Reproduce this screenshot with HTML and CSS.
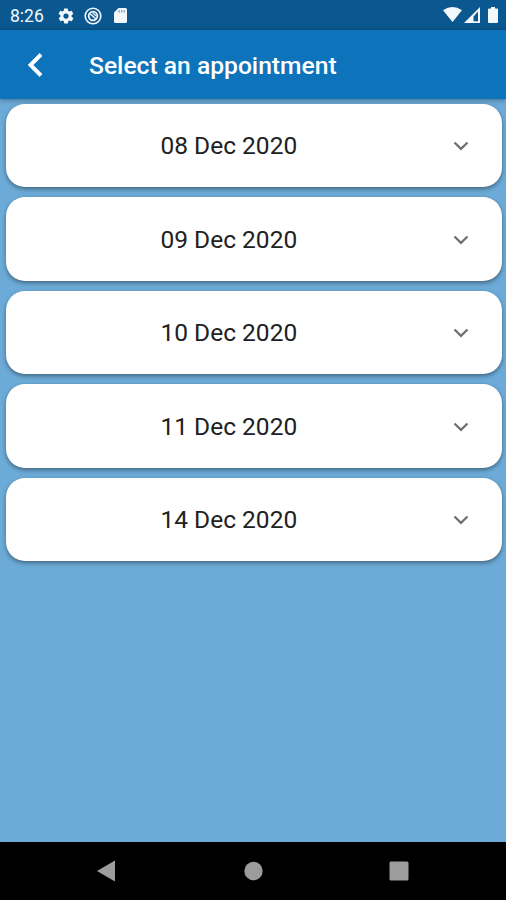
FILE: index.html
```html
<!DOCTYPE html>
<html lang="en">
<head>
<meta charset="utf-8">
<title>Select an appointment</title>
<link rel="stylesheet" href="styles.css">
</head>
<body>
<div class="screen">
  <div class="status">
    <span class="time">8:26</span>
    <svg class="gear" width="18" height="18" viewBox="0 0 24 24"><path fill="currentColor" d="M19.4 13c0-.3.1-.6.1-1s0-.7-.1-1l2.1-1.600c.2-.2.2-.4.1-.6l-2-3.500c-.1-.2-.4-.3-.6-.2l-2.500 1c-.5-.4-1.100-.7-1.700-1l-.4-2.600c0-.3-.2-.5-.5-.5h-4c-.2 0-.4.2-.5.4l-.4 2.700c-.6.2-1.100.6-1.700 1l-2.500-1c-.2-.1-.5 0-.6.2l-2 3.500c-.1.2-.1.5.1.6L4.600 11c0 .3-.1.6-.1 1s0 .7.1 1l-2.100 1.600c-.2.2-.2.4-.1.6l2 3.500c.1.2.4.3.6.2l2.500-1c.5.4 1.100.7 1.700 1l.4 2.600c0 .3.2.5.5.5h4c.2 0 .5-.2.5-.4l.4-2.600c.6-.3 1.200-.6 1.700-1l2.500 1c.2.100.5 0 .6-.2l2-3.500c.1-.2.1-.5-.1-.6L19.400 13zM12 15.500a3.500 3.500 0 1 1 0-7 3.500 3.500 0 0 1 0 7z"/></svg>
    <svg class="sync" width="18" height="18" viewBox="0 0 18 18" fill="none" stroke="currentColor"><circle cx="9" cy="9" r="7.800" stroke-width="1.600"/><circle cx="9" cy="9" r="4.300" stroke-width="1.800"/><path d="M5.800 6.500l6 5.300" stroke-width="1.500"/><path d="M8.800 6l3.200 2.800" stroke-width="1.200"/></svg>
    <svg class="sd" width="13" height="15" viewBox="0 0 13 15"><path fill="currentColor" d="M4.500 0H11.500Q13 0 13 1.500V13.500Q13 15 11.500 15H1.500Q0 15 0 13.500V4.500z"/><path d="M5.200 2v2.400M7.700 2v2.400M10.200 2v2.400" stroke="#7fa6c6" stroke-width="1.300"/></svg>
    <svg class="wifi" width="19" height="15" viewBox="0 0 19 15"><path fill="currentColor" d="M0 3.300Q9.500-3.300 19 3.300L9.500 15z"/></svg>
    <svg class="signal" width="16" height="16" viewBox="0 0 16 16"><path fill="currentColor" fill-rule="evenodd" d="M0 16L16 0V16zM9.500 9.500V14.300H14V4.500z"/></svg>
    <svg class="battery" width="10" height="16" viewBox="0 0 10 16"><path fill="currentColor" d="M3 0h4v1.500h2q1 0 1 1V15q0 1-1 1H1q-1 0-1-1V2.500q0-1 1-1h2z"/></svg>
  </div>
  <header class="bar">
    <svg class="back" width="16" height="26" viewBox="0 0 16 26"><path d="M14 2.500L3.500 13L14 23.500" fill="none" stroke="currentColor" stroke-width="3.900"/></svg>
    <h1>Select an appointment</h1>
  </header>
  <main class="list">
    <div class="card"><span class="date">08 Dec 2020</span><svg class="chev" width="16" height="10" viewBox="0 0 16 10"><path d="M1.500 1.500L8 7.800L14.500 1.500"/></svg></div>
    <div class="card"><span class="date">09 Dec 2020</span><svg class="chev" width="16" height="10" viewBox="0 0 16 10"><path d="M1.500 1.500L8 7.800L14.500 1.500"/></svg></div>
    <div class="card"><span class="date">10 Dec 2020</span><svg class="chev" width="16" height="10" viewBox="0 0 16 10"><path d="M1.500 1.500L8 7.800L14.500 1.500"/></svg></div>
    <div class="card"><span class="date">11 Dec 2020</span><svg class="chev" width="16" height="10" viewBox="0 0 16 10"><path d="M1.500 1.500L8 7.800L14.500 1.500"/></svg></div>
    <div class="card"><span class="date">14 Dec 2020</span><svg class="chev" width="16" height="10" viewBox="0 0 16 10"><path d="M1.500 1.500L8 7.800L14.500 1.500"/></svg></div>
  </main>
  <nav class="nav">
    <svg width="20" height="22" viewBox="0 0 20 22"><path fill="currentColor" d="M0 11L18 .5V21.500z"/></svg>
    <svg width="18" height="20" viewBox="0 0 18 20"><circle cx="9.500" cy="10" r="9.200" fill="currentColor"/></svg>
    <svg width="20" height="20" viewBox="0 0 20 20"><rect x=".5" y=".5" width="19" height="19" rx="1.500" fill="currentColor"/></svg>
  </nav>
</div>
</body>
</html>
```
FILE: styles.css
```css
* { box-sizing: border-box; }
body { margin: 0; font-family: Roboto, "Liberation Sans", sans-serif; }
svg { display: block; flex: none; overflow: visible; }
.screen { width: 506px; height: 900px; display: flex; flex-direction: column; background: #6caad7; overflow: hidden; }
.status { height: 30px; flex: none; display: flex; align-items: center; padding: 1px 8px 0 10px; background: #0b578f; color: #f3f8fc; }
.time { width: 47px; font-size: 17.5px; line-height: 20px; }
.sync { margin-left: 9px; }
.sd { margin-left: 12px; }
.wifi { margin: -2px 0 0 auto; }
.signal { margin: -1px 0 0 2px; }
.battery { margin: -1px 0 0 8px; }
.bar { height: 69px; flex: none; display: flex; align-items: center; padding-left: 27px; background: #0d73bb; color: #fff; box-shadow: 0 1px 5px rgba(0, 0, 0, .35); }
h1 { margin: 2px 0 0 46px; font-size: 24.65px; font-weight: 500; line-height: 30px; white-space: nowrap; }
.list { flex: 1; display: flex; flex-direction: column; gap: 10px; padding: 4.6px 4.5px 0 5.5px; }
.card { height: 83.5px; flex: none; display: flex; align-items: center; justify-content: space-between; padding: 2px 32.5px 0 155px; background: #fff; border-radius: 19px; box-shadow: 0 2px 4px rgba(0, 0, 0, .4); }
.date { font-size: 24.5px; line-height: 30px; color: #212121; white-space: nowrap; }
.chev { fill: none; stroke: #707070; stroke-width: 2.3; }
.nav { height: 58px; flex: none; display: grid; grid-template-columns: 212px 80px 212px; align-items: center; justify-content: center; justify-items: center; background: #000; color: #9c9c9c; }
```
